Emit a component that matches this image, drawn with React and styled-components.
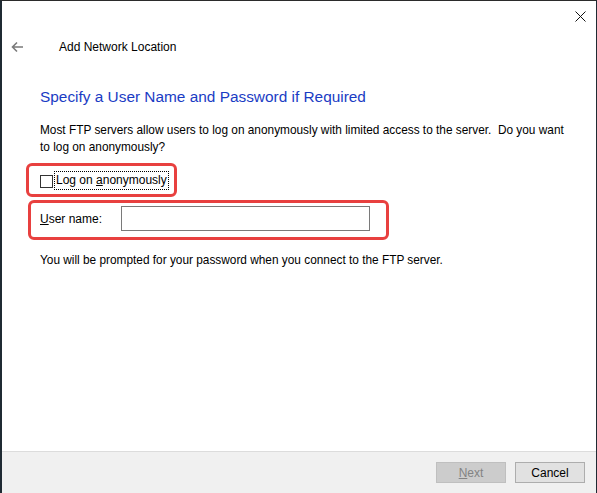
import React from "react";
import styled, { createGlobalStyle } from "styled-components";

const GlobalStyle = createGlobalStyle`
  html, body {
    margin: 0;
    padding: 0;
    background: #1f2a33;
  }
  * {
    box-sizing: border-box;
  }
`;

const Window = styled.div`
  width: 597px;
  height: 493px;
  display: flex;
  flex-direction: column;
  background: #ffffff;
  border-top: 1px solid #2b2b2b;
  border-left: 2px solid #1f2a33;
  border-right: 1px solid #1f2a33;
  font-family: "Liberation Sans", Arial, sans-serif;
  font-size: 12px;
  color: #000;
`;

const TitleBar = styled.div`
  height: 30px;
  display: flex;
  justify-content: flex-end;
  align-items: center;
  padding-right: 9px;
`;

const CloseButton = styled.button`
  width: 14px;
  height: 14px;
  padding: 0;
  border: none;
  background: transparent;
  display: flex;
  align-items: center;
  justify-content: center;
`;

const NavRow = styled.div`
  height: 31px;
  padding-top: 1px;
  display: flex;
  align-items: center;
  padding-left: 8px;
`;

const BackButton = styled.button`
  width: 14px;
  height: 14px;
  padding: 0;
  border: none;
  background: transparent;
  display: flex;
  align-items: center;
  justify-content: center;
  margin-right: 35px;
`;

const WindowTitle = styled.span`
  font-size: 12px;
  color: #000;
`;

const Content = styled.div`
  padding-left: 38px;
  padding-right: 20px;
  display: flex;
  flex-direction: column;
  align-items: flex-start;
`;

const Heading = styled.h1`
  margin: 25px 0 0;
  font-size: 15.4px;
  line-height: 20px;
  font-weight: normal;
  color: #1a3cc4;
`;

const Text = styled.p`
  margin: ${(p) => p.$top || 0}px 0 0;
  font-size: 11.85px;
  line-height: 17px;
`;

const Callout = styled.div`
  display: flex;
  align-items: center;
  border: 3px solid #e8403f;
  border-radius: 6px;
  margin-left: ${(p) => p.$left}px;
  margin-top: ${(p) => p.$top}px;
  width: ${(p) => p.$width}px;
  height: ${(p) => p.$height}px;
  padding-left: ${(p) => 40 - 2 - 38 - p.$left - 3}px;
`;

const CheckBox = styled.span`
  width: 13px;
  height: 13px;
  border: 1px solid #333;
  background: #fff;
  margin-top: 3px;
  margin-right: 2px;
`;

const FocusLabel = styled.span`
  outline: 1px dotted #000;
  padding: 1px 1px 2px;
  line-height: 14px;
`;

const Underlined = styled.span`
  text-decoration: underline;
`;

const FieldLabel = styled.span`
  width: 81px;
  margin-top: -3px;
`;

const TextInput = styled.input`
  width: 249px;
  height: 25px;
  border: 1px solid #7a7a7a;
  background: #fff;
  margin-top: -3px;
  font: inherit;
`;

const Footer = styled.div`
  margin-top: auto;
  height: 42px;
  background: #f0f0f0;
  border-top: 1px solid #dcdcdc;
  display: flex;
  justify-content: flex-end;
  align-items: center;
  gap: 9px;
  padding-right: 11px;
`;

const Button = styled.button`
  width: 70px;
  height: 21px;
  padding: 0;
  font-family: inherit;
  font-size: 12px;
  background: ${(p) => (p.disabled ? "#cccccc" : "#e1e1e1")};
  border: 1px solid ${(p) => (p.disabled ? "#bfbfbf" : "#adadad")};
  color: ${(p) => (p.disabled ? "#838383" : "#000")};
`;

export default function App() {
  return (
    <>
      <GlobalStyle />
      <Window>
        <TitleBar>
          <CloseButton aria-label="Close">
            <svg width="11" height="11" viewBox="0 0 11 11">
              <path d="M0.5 0.5 L10.5 10.5 M10.5 0.5 L0.5 10.5" stroke="#111" strokeWidth="1" fill="none" />
            </svg>
          </CloseButton>
        </TitleBar>
        <NavRow>
          <BackButton aria-label="Back">
            <svg width="13" height="12" viewBox="0 0 13 12">
              <path d="M12 6 H1.5 M6 1.5 L1.5 6 L6 10.5" stroke="#7a7a7a" strokeWidth="1.6" fill="none" />
            </svg>
          </BackButton>
          <WindowTitle>Add Network Location</WindowTitle>
        </NavRow>
        <Content>
          <Heading>Specify a User Name and Password if Required</Heading>
          <Text $top={15}>
            Most FTP servers allow users to log on anonymously with limited access to the server.&nbsp; Do you want
            <br />
            to log on anonymously?
          </Text>
          <Callout $left={-14} $top={7} $width={151} $height={34}>
            <CheckBox />
            <FocusLabel>
              Log on <Underlined>a</Underlined>nonymously
            </FocusLabel>
          </Callout>
          <Callout $left={-12} $top={3} $width={361} $height={40}>
            <FieldLabel>
              <Underlined>U</Underlined>ser name:
            </FieldLabel>
            <TextInput type="text" />
          </Callout>
          <Text $top={12}>You will be prompted for your password when you connect to the FTP server.</Text>
        </Content>
        <Footer>
          <Button disabled>
            <Underlined>N</Underlined>ext
          </Button>
          <Button>Cancel</Button>
        </Footer>
      </Window>
    </>
  );
}
